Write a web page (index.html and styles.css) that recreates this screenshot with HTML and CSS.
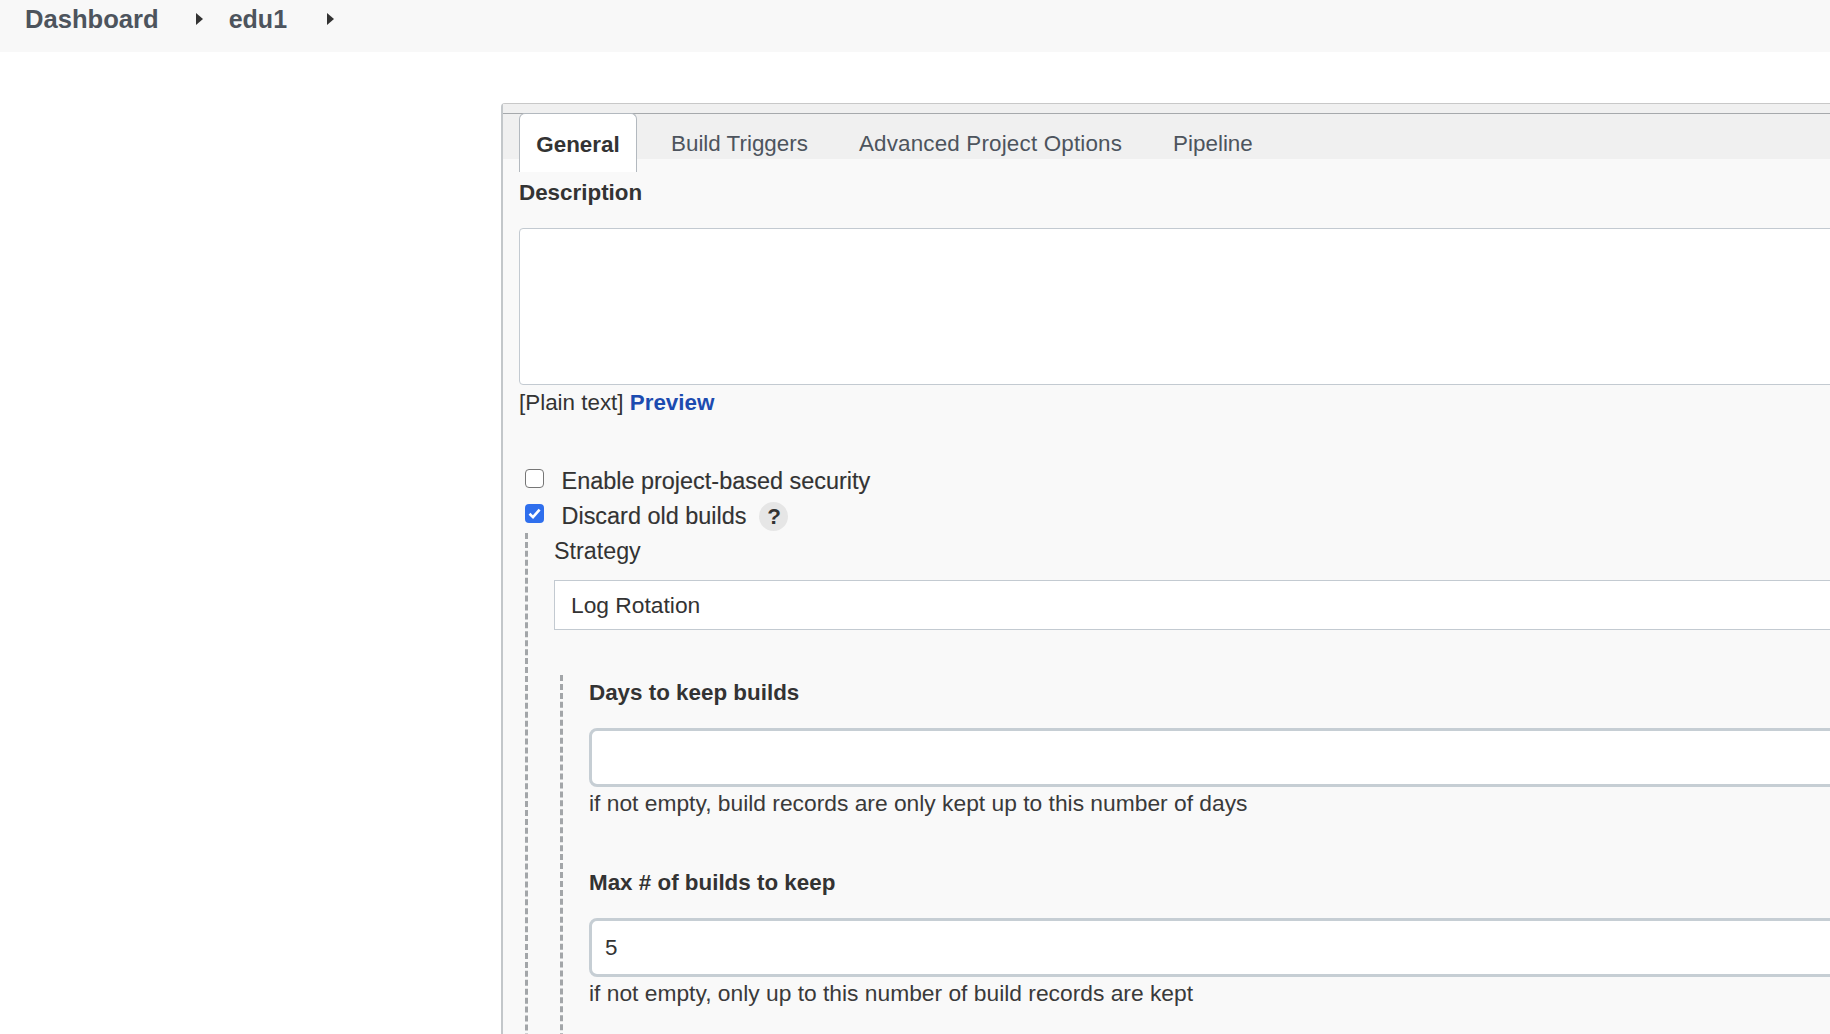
FILE: index.html
```html
<!DOCTYPE html>
<html lang="en">
<head>
<meta charset="utf-8">
<title>edu1 Config</title>
<link rel="stylesheet" href="styles.css">
</head>
<body>
<div class="page">
  <nav class="crumbs">
    <a class="crumb crumb-dash">Dashboard</a>
    <span class="arrow arrow-a"></span>
    <a class="crumb crumb-job">edu1</a>
    <span class="arrow arrow-b"></span>
  </nav>
  <main class="panel">
    <div class="strip"></div>
    <div class="tabbar">
      <div class="tab tab-active">General</div>
      <div class="tab tab-build">Build Triggers</div>
      <div class="tab tab-adv">Advanced Project Options</div>
      <div class="tab">Pipeline</div>
    </div>
    <div class="content">
      <div class="label-bold desc-label">Description</div>
      <div class="textarea"></div>
      <div class="plain">[Plain text] <a class="preview">Preview</a></div>
      <div class="check-row row-first">
        <span class="box"></span>
        <span class="check-label">Enable project-based security</span>
      </div>
      <div class="check-row row-second">
        <span class="box box-on">
          <svg viewBox="0 0 19 19" width="19" height="19"><path d="M4.5 9.8 8 13.2 14.6 5.6" fill="none" stroke="#fff" stroke-width="2.6"/></svg>
        </span>
        <span class="check-label">Discard old builds</span>
        <span class="help">?</span>
      </div>
      <section class="nest">
        <div class="strategy">Strategy</div>
        <div class="select">Log Rotation</div>
        <section class="nest-inner">
          <div class="label-bold field-label">Days to keep builds</div>
          <div class="input"></div>
          <div class="hint">if not empty, build records are only kept up to this number of days</div>
          <div class="label-bold field-label second-label">Max # of builds to keep</div>
          <div class="input">5</div>
          <div class="hint">if not empty, only up to this number of build records are kept</div>
        </section>
      </section>
    </div>
  </main>
</div>
</body>
</html>
```
FILE: styles.css
```css
* { box-sizing: border-box; }
html, body { margin: 0; padding: 0; background: #fff; }
body {
  font-family: "Liberation Sans", Arial, sans-serif;
  font-size: 22.4px;
  color: #333;
}
.page { width: 1830px; height: 1034px; overflow: hidden; }

.crumbs {
  display: flex;
  align-items: center;
  height: 52px;
  padding: 0 0 14px 25px;
  background: #f8f8f8;
}
.crumb { font-size: 25.6px; font-weight: 700; color: #4d545d; line-height: 38px; }
.crumb-job { font-size: 25px; }
.arrow {
  width: 0; height: 0;
  border-left: 7px solid #333;
  border-top: 6px solid transparent;
  border-bottom: 6px solid transparent;
}
.arrow-a { margin-left: 37px; margin-right: 26px; }
.arrow-b { margin-left: 40px; }

.panel {
  width: 1500px;
  height: 931px;
  margin: 51px 0 0 501px;
  background: #f9f9f9;
  border-left: 2px solid #c3c7ca;
  border-top: 1px solid #c8c8c8;
  border-top-left-radius: 4px;
}
.strip { height: 9px; background: #f0f0f0; }
.tabbar {
  display: flex;
  align-items: flex-start;
  height: 46px;
  padding-left: 16px;
  background: #f0f0f0;
  border-top: 1px solid #a6a9ac;
  color: #4d545d;
}
.tab { line-height: 48px; padding-top: 6px; }
.tab-active {
  width: 118px;
  height: 59px;
  margin-top: -1px;
  margin-right: 34px;
  padding-top: 7px;
  text-align: center;
  font-weight: 700;
  color: #333;
  background: #fff;
  border: 1px solid #b3b9bf;
  border-bottom: 0;
  border-radius: 6px 6px 0 0;
}
.tab-build { margin-right: 51px; }
.tab-adv { margin-right: 51px; letter-spacing: 0.18px; }

.content { padding: 0 0 0 16px; }
.label-bold { font-weight: 700; color: #333; line-height: 30px; }
.desc-label { margin-top: 19px; }
.textarea {
  height: 157px;
  margin-top: 20px;
  background: #fff;
  border: 1px solid #c3cad1;
  border-radius: 4px 0 0 4px;
}
.plain { margin-top: 3px; line-height: 30px; }
.preview { font-weight: 700; color: #1c4bb0; }

.check-row { display: flex; align-items: center; height: 35px; padding-left: 6px; }
.row-first { margin-top: 46px; }
.box {
  flex: none;
  width: 19px; height: 19px;
  margin-top: -6px;
  background: #fff;
  border: 1px solid #767676;
  border-radius: 4px;
}
.box-on { background: #2f6fed; border: 0; }
.box-on svg { display: block; }
.check-label { margin-left: 17.5px; font-size: 23.45px; color: #333; -webkit-text-stroke: 0.15px #333; }
.help {
  width: 29px; height: 29px;
  margin-left: 13px;
  border-radius: 50%;
  background: #e6e6e6;
  text-align: center;
  line-height: 29px;
  font-weight: 700;
}

.nest {
  margin-top: -1px;
  margin-left: 6px;
  padding-left: 26px;
  border-left: 3px dashed #a3a6a9;
  height: 560px;
}
.strategy { line-height: 30px; padding-top: 3px; height: 35px; font-size: 23.3px; }
.select {
  height: 50px;
  margin-top: 12px;
  padding-left: 16px;
  font-size: 22.8px;
  line-height: 49px;
  background: #fff;
  border: 1px solid #c3cad1;
}
.nest-inner {
  margin-top: 45px;
  margin-left: 6px;
  padding-left: 26px;
  border-left: 3px dashed #a3a6a9;
  height: 400px;
}
.field-label { padding-top: 3px; height: 33px; }
.input {
  height: 59px;
  margin-top: 20px;
  padding-left: 13px;
  line-height: 53px;
  background: #fff;
  border: 3px solid #c6ced4;
  border-radius: 8px 0 0 8px;
}
.hint { margin-top: 1px; font-size: 22.8px; line-height: 30px; color: #3a3a3a; }
.second-label { margin-top: 47px; }
```
